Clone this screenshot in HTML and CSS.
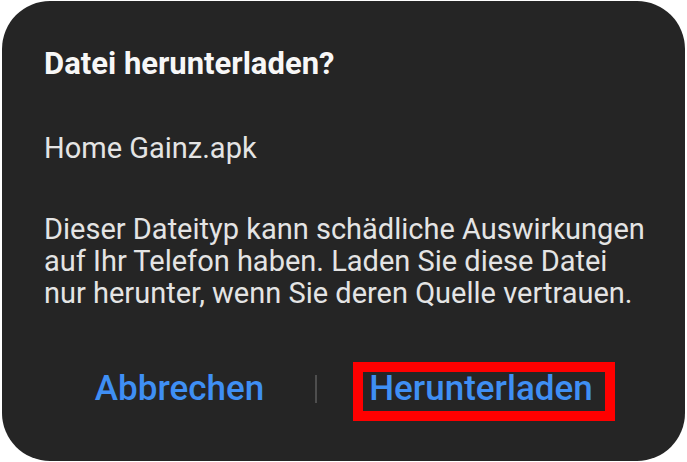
FILE: index.html
```html
<!DOCTYPE html>
<html lang="de">
<head>
<meta charset="utf-8">
<link rel="stylesheet" href="styles.css">
</head>
<body>
<div class="dialog">
  <div class="title">Datei herunterladen?</div>
  <div class="file">Home Gainz.apk</div>
  <div class="message">Dieser Dateityp kann schädliche Auswirkungen auf Ihr Telefon haben. Laden Sie diese Datei nur herunter, wenn Sie deren Quelle vertrauen.</div>
  <div class="actions">
    <div class="action"><span class="btn">Abbrechen</span></div>
    <div class="divider"></div>
    <div class="action"><span class="btn">Herunterladen<span class="mark"></span></span></div>
  </div>
</div>
</body>
</html>
```
FILE: styles.css
```css
html, body {
  margin: 0;
  padding: 0;
  background: #ffffff;
}
body {
  width: 687px;
  height: 462px;
  overflow: hidden;
  font-family: Roboto, "Noto Sans", sans-serif;
}
.dialog {
  box-sizing: border-box;
  margin: 1px 2px 0 2px;
  width: 683px;
  height: 460px;
  background: #252525;
  border-radius: 48px;
  padding: 45px 40px 0 42px;
}
.title {
  font-size: 31px;
  line-height: 36px;
  font-weight: 700;
  color: #f7f7f7;
}
.file {
  margin-top: 50px;
  font-size: 29px;
  line-height: 32px;
  color: #e4e4e4;
}
.message {
  margin-top: 49px;
  font-size: 29px;
  line-height: 32px;
  color: #e4e4e4;
}
.actions {
  margin-top: 60px;
  display: grid;
  grid-template-columns: 271px 2px 1fr;
  align-items: center;
  height: 40px;
}
.action {
  display: flex;
  justify-content: center;
}
.btn {
  position: relative;
  font-size: 35px;
  line-height: 40px;
  font-weight: 500;
  color: #3f8ff4;
}
.divider {
  width: 2px;
  height: 28px;
  background: #4e4e4e;
}
.mark {
  position: absolute;
  left: -16px;
  right: -22px;
  top: -7px;
  bottom: -12px;
  border: 10px solid #ff0000;
}
```
